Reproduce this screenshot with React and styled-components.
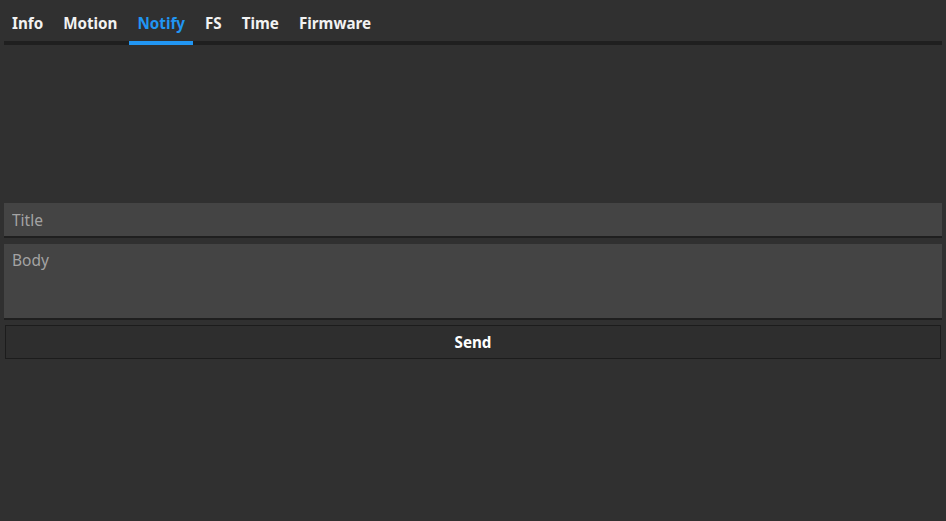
import React from "react";
import styled, { createGlobalStyle } from "styled-components";

const Global = createGlobalStyle`
  html, body { margin: 0; padding: 0; background: #303030; height: 100%; }
  body { font-family: "Noto Sans", "Open Sans", sans-serif; color: #fff; }
  #root { min-height: 100%; }
  * { box-sizing: border-box; }
`;

const Page = styled.div`
  padding: 4px;
  display: flex;
  flex-direction: column;
`;

const TabBar = styled.div`
  display: flex;
  gap: 4px;
  border-bottom: 4px solid #1f1f1f;
  height: 41px;
`;

const Tab = styled.button`
  background: none;
  border: none;
  padding: 0 8px;
  height: 41px;
  margin-bottom: -4px;
  font-family: inherit;
  font-size: 15.2px;
  font-weight: 700;
  color: ${(p) => (p.$active ? "#2196f3" : "#f2f2f2")};
  border-bottom: 4px solid ${(p) => (p.$active ? "#2196f3" : "transparent")};
  cursor: pointer;
`;

const Form = styled.div`
  margin-top: 158px;
  display: flex;
  flex-direction: column;
`;

const Input = styled.input`
  height: 35px;
  background: #444444;
  border: none;
  border-bottom: 2px solid #1f1f1f;
  color: #ddd;
  font-family: inherit;
  font-size: 15.5px;
  padding: 0 8px;
  outline: none;
  &::placeholder { color: #a3a3a3; }
`;

const TextArea = styled.textarea`
  margin-top: 6px;
  height: 76px;
  background: #444444;
  border: none;
  border-bottom: 2px solid #1f1f1f;
  color: #ddd;
  font-family: inherit;
  font-size: 15.5px;
  padding: 5px 8px;
  resize: none;
  outline: none;
  &::placeholder { color: #a3a3a3; }
`;

const Button = styled.button`
  margin: 5px 1px 0;
  height: 34px;
  background: #2e2e2e;
  border: 1px solid #1c1c1c;
  color: #fff;
  font-family: inherit;
  font-size: 15.2px;
  font-weight: 700;
  cursor: pointer;
`;

const tabs = ["Info", "Motion", "Notify", "FS", "Time", "Firmware"];

export default function App() {
  return (
    <>
      <Global />
      <Page>
        <TabBar>
          {tabs.map((t) => (
            <Tab key={t} $active={t === "Notify"}>{t}</Tab>
          ))}
        </TabBar>
        <Form>
          <Input placeholder="Title" />
          <TextArea placeholder="Body" />
          <Button>Send</Button>
        </Form>
      </Page>
    </>
  );
}
